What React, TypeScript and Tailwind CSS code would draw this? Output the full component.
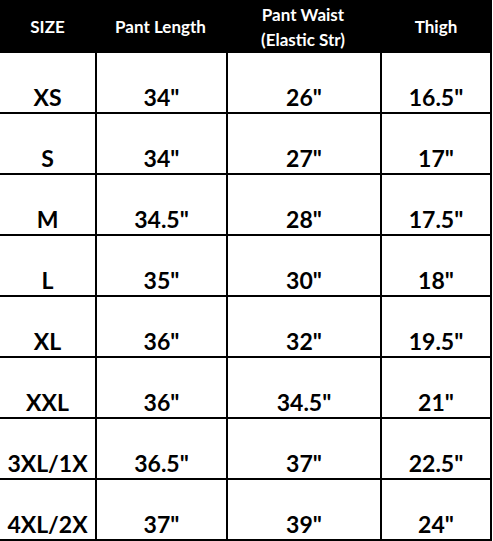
const headers = ["SIZE", "Pant Length", "Pant Waist\n(Elastic Str)", "Thigh"]

const rows = [
  ["XS", '34"', '26"', '16.5"'],
  ["S", '34"', '27"', '17"'],
  ["M", '34.5"', '28"', '17.5"'],
  ["L", '35"', '30"', '18"'],
  ["XL", '36"', '32"', '19.5"'],
  ["XXL", '36"', '34.5"', '21"'],
  ["3XL/1X", '36.5"', '37"', '22.5"'],
  ["4XL/2X", '37"', '39"', '24"'],
]

export default function App() {
  return (
    <div className="w-[493px] h-[541px] bg-white" style={{ fontFamily: "Lato, 'Open Sans', sans-serif" }}>
      <div className="grid w-[492px] grid-cols-[95px_131px_154px_112px] grid-rows-[53px_repeat(8,61px)]">
        {headers.map((h) => (
          <div
            key={h}
            className="bg-black text-white font-bold text-[17px] leading-[25px] flex items-center justify-center text-center whitespace-pre-line"
          >
            {h}
          </div>
        ))}
        {rows.map((row) =>
          row.map((cell, i) => (
            <div
              key={row[0] + i}
              className={`border-b-2 border-black flex items-end justify-center pb-[3px] text-[23px] leading-none font-bold text-black ${
                i > 0 ? "border-l-2" : ""
              } ${i === 3 ? "border-r-2" : ""}`}
            >
              {cell}
            </div>
          ))
        )}
      </div>
    </div>
  )
}
